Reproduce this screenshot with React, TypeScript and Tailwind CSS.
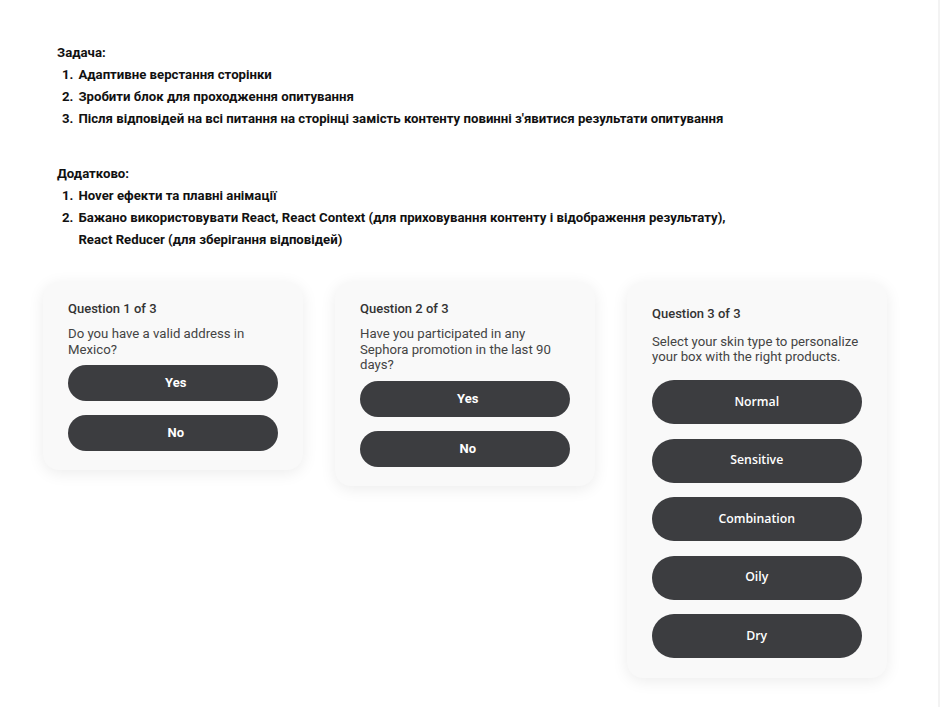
import { useState } from "react";

type Question = {
  id: number;
  text: string;
  options: string[];
};

const questions: Question[] = [
  { id: 1, text: "Do you have a valid address in Mexico?", options: ["Yes", "No"] },
  {
    id: 2,
    text: "Have you participated in any Sephora promotion in the last 90 days?",
    options: ["Yes", "No"],
  },
  {
    id: 3,
    text: "Select your skin type to personalize your box with the right products.",
    options: ["Normal", "Sensitive", "Combination", "Oily", "Dry"],
  },
];

const roboto = "font-['Roboto','Liberation_Sans',sans-serif]";

const App = () => {
  const [answers, setAnswers] = useState<Record<number, string>>({});

  const pick = (id: number, value: string) => {
    setAnswers((prev) => ({ ...prev, [id]: value }));
  };

  return (
    <div className={`min-h-screen bg-white ${roboto} text-[#111] border-r-2 border-[#f3f3f3]`}>
      <div className="px-[57px] pt-[42px]">
        <h2 className="text-[13.2px] font-bold leading-[22px]">Задача:</h2>
        <ol className="pl-[5px] text-[13.2px] font-bold leading-[22px]">
          <li className="flex gap-[5px]">
            <span>1.</span>
            <span>Адаптивне верстання сторінки</span>
          </li>
          <li className="flex gap-[5px]">
            <span>2.</span>
            <span>Зробити блок для проходження опитування</span>
          </li>
          <li className="flex gap-[5px]">
            <span>3.</span>
            <span>
              Після відповідей на всі питання на сторінці замість контенту повинні з'явитися результати опитування
            </span>
          </li>
        </ol>

        <h2 className="mt-[33px] text-[13.2px] font-bold leading-[22px]">Додатково:</h2>
        <ol className="pl-[5px] text-[13.2px] font-bold leading-[22px]">
          <li className="flex gap-[5px]">
            <span>1.</span>
            <span>Hover ефекти та плавні анімації</span>
          </li>
          <li className="flex gap-[5px]">
            <span>2.</span>
            <span>
              Бажано використовувати React, React Context (для приховування контенту і відображення результату),
              <br />
              React Reducer (для зберігання відповідей)
            </span>
          </li>
        </ol>
      </div>

      <div className="mt-[31px] flex items-start gap-[32.5px] pl-[43px]">
        {questions.map((q) => {
          const big = q.options.length > 2;
          return (
            <div
              key={q.id}
              className={`w-[259.5px] rounded-[16px] bg-[#f9f9f9] px-[25px] shadow-[0_3px_16px_rgba(0,0,0,0.08)] ${
                big ? "pt-[23px] pb-[20px]" : "pt-[18px] pb-[19px]"
              }`}
            >
              <p className="text-[13px] font-medium leading-[18px] text-[#333]">
                Question {q.id} of {questions.length}
              </p>
              <p
                className={`text-[13.2px] text-[#444] ${
                  big ? "mt-[11px] leading-[15px]" : "mt-[8px] leading-[15.5px]"
                }`}
              >
                {q.text}
              </p>
              <div className={`flex flex-col ${big ? "mt-[16px] gap-[14.5px]" : "mt-[8px] gap-[14px]"}`}>
                {q.options.map((opt) => (
                  <button
                    key={opt}
                    onClick={() => pick(q.id, opt)}
                    className={`w-[209.5px] rounded-full bg-[#3c3d40] text-white transition-all duration-200 hover:bg-[#222] hover:scale-[1.02] ${
                      big
                        ? "h-[44px] font-['Open_Sans',sans-serif] text-[12.3px] font-semibold"
                        : "h-[36px] pl-[6px] text-[13px] font-bold"
                    } ${answers[q.id] === opt ? "ring-2 ring-[#999]" : ""}`}
                  >
                    {opt}
                  </button>
                ))}
              </div>
            </div>
          );
        })}
      </div>
    </div>
  );
};

export default App;
